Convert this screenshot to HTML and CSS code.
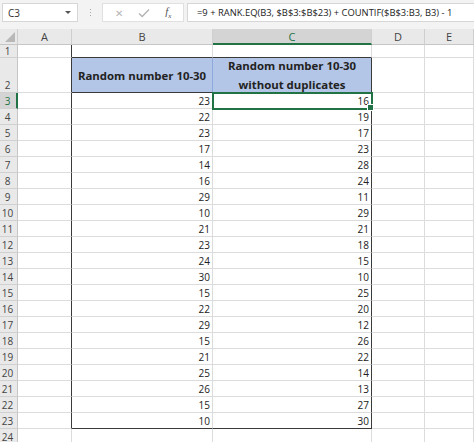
FILE: index.html
```html
<!DOCTYPE html>
<html>
<head>
<meta charset="utf-8">
<link rel="stylesheet" href="styles.css">
</head>
<body>
<div class="app">
  <div class="fbar">
    <div class="namebox"><span>C3</span><span class="dd"></span></div>
    <div class="dots"><i></i><i></i><i></i></div>
    <div class="btns">
      <span class="x">&#x2715;</span>
      <svg class="chk" width="12" height="10" viewBox="0 0 12 10"><path d="M1 5.5 L4.2 8.5 L11 1.5" fill="none" stroke="#b3b3b3" stroke-width="1.3"/></svg>
      <span class="fx"><i>f</i><sub>x</sub></span>
    </div>
    <div class="formula">=9 + RANK.EQ(B3, $B$3:$B$23) + COUNTIF($B$3:B3, B3) - 1</div>
  </div>
  <div class="sheet" id="sheet">
    <div class="ch corner"><svg width="10" height="10" viewBox="0 0 10 10"><path d="M10 0 L10 10 L0 10 Z" fill="#b8b8b8"/></svg></div>
    <div class="ch">A</div>
    <div class="ch">B</div>
    <div class="ch sel">C</div>
    <div class="ch">D</div>
    <div class="ch">E</div>

    <div class="rh">1</div>
    <div class="c edge-r"></div>
    <div class="c bb"></div>
    <div class="c bb"></div>
    <div class="c"></div>
    <div class="c"></div>

    <div class="rh r2">2</div>
    <div class="c edge-r"></div>
    <div class="c hd hdb"><span>Random number 10-30</span></div>
    <div class="c hd hdc"><span>Random number 10-30<br>without duplicates</span></div>
    <div class="c"></div>
    <div class="c"></div>
  </div>
</div>
<script src="app.js"></script>
</body>
</html>
```
FILE: app.js
```js
var B=[23,22,23,17,14,16,29,10,21,23,24,30,15,22,29,15,21,25,26,15,10];
var C=[16,19,17,23,28,24,11,29,21,18,15,10,25,20,12,26,22,14,13,27,30];
var s=document.getElementById('sheet');
var h='';
for(var i=0;i<22;i++){
  var r=i+3;
  var last=(i===20);
  if(i<21){
    h+='<div class="rh'+(r===3?' rsel':'')+'">'+r+'</div>';
    h+='<div class="c edge-r"></div>';
    h+='<div class="c num'+(last?' bb':'')+'">'+B[i]+'</div>';
    h+='<div class="c num edge-r'+(last?' bb':'')+(r===3?' csel':'')+'">'+C[i]+'</div>';
    h+='<div class="c"></div><div class="c"></div>';
  } else {
    h+='<div class="rh">'+r+'</div><div class="c"></div><div class="c"></div><div class="c"></div><div class="c"></div><div class="c"></div>';
  }
}
s.insertAdjacentHTML('beforeend',h);
```
FILE: styles.css
```css
html,body{margin:0;padding:0;}
body{width:474px;height:442px;overflow:hidden;background:#fff;font-family:"Open Sans","Noto Sans",sans-serif;}
.app{display:flex;flex-direction:column;}
.fbar{height:29px;background:#f3f3f3;display:flex;align-items:flex-start;padding-top:3px;box-sizing:border-box;}
.namebox{margin-left:2px;width:76px;height:19px;background:#fff;border:1px solid #d6d6d6;box-sizing:border-box;display:flex;align-items:center;justify-content:space-between;padding:0 6px 0 5px;font-size:10px;color:#333;}
.dd{width:0;height:0;border-left:3px solid transparent;border-right:3px solid transparent;border-top:3px solid #555;}
.dots{width:24px;height:19px;display:flex;flex-direction:column;align-items:center;justify-content:center;gap:2px;}
.dots i{display:block;width:1px;height:1px;background:#a8a8a8;}
.btns{width:82px;height:19px;background:#fff;border:1px solid #e0e0e0;box-sizing:border-box;display:flex;align-items:center;justify-content:space-around;padding:0 4px;}
.x{font-size:10px;color:#b5b5b5;}
.fx{font-family:"Liberation Serif",serif;font-size:11px;color:#555;}
.fx sub{font-size:7px;font-style:italic;}
.formula{margin-left:3px;flex:1;height:19px;background:#fff;border:1px solid #d6d6d6;border-right:none;box-sizing:border-box;font-size:9.4px;line-height:17px;padding-left:9px;color:#222;white-space:nowrap;overflow:hidden;}
.sheet{display:grid;grid-template-columns:18px 54px 141px 159px 53px 49px;grid-template-rows:16px 13px 35px;grid-auto-rows:16px;}
.sheet>div{box-sizing:border-box;border-right:1px solid #dcdcdc;border-bottom:1px solid #dcdcdc;}
.ch{background:#e9e9e9;font-size:11px;color:#444;display:flex;align-items:center;justify-content:center;border-right-color:#cfcfcf !important;border-bottom-color:#c6c6c6 !important;}
.corner{justify-content:flex-end;align-items:flex-end;padding:0 2px 2px 0;}
.ch.sel{background:#d4d4d4;color:#217346;border-bottom:2px solid #217346 !important;}
.rh{background:#e9e9e9;font-size:10px;color:#444;display:flex;align-items:center;justify-content:center;padding-right:2px;border-right-color:#c6c6c6 !important;border-bottom-color:#d0d0d0 !important;}
.rh.r2{align-items:flex-end;}
.rh.rsel{background:#d4d4d4;color:#217346;border-right:2px solid #217346 !important;padding-right:1px;}
.c{background:#fff;}
.sheet>.edge-r{border-right:1px solid #3a3a3a;}
.sheet>.bb{border-bottom:1px solid #3a3a3a;}
.hd{background:#b4c6e7;font-weight:700;font-size:11.4px;color:#222;display:flex;align-items:center;justify-content:center;text-align:center;line-height:19px;}
.sheet>.hdb{border-right:1px solid #8ea9db;border-bottom:1px solid #3a3a3a;}
.sheet>.hdc{border-right:1px solid #3a3a3a;border-bottom:1px solid #3a3a3a;}
.num{font-size:10px;color:#222;text-align:right;padding-right:2px;line-height:16px;}
.csel{position:relative;outline:2px solid #217346;outline-offset:-1px;}
.csel::after{content:"";position:absolute;right:-3px;bottom:-3px;width:5px;height:5px;background:#217346;border:1px solid #fff;}
```
